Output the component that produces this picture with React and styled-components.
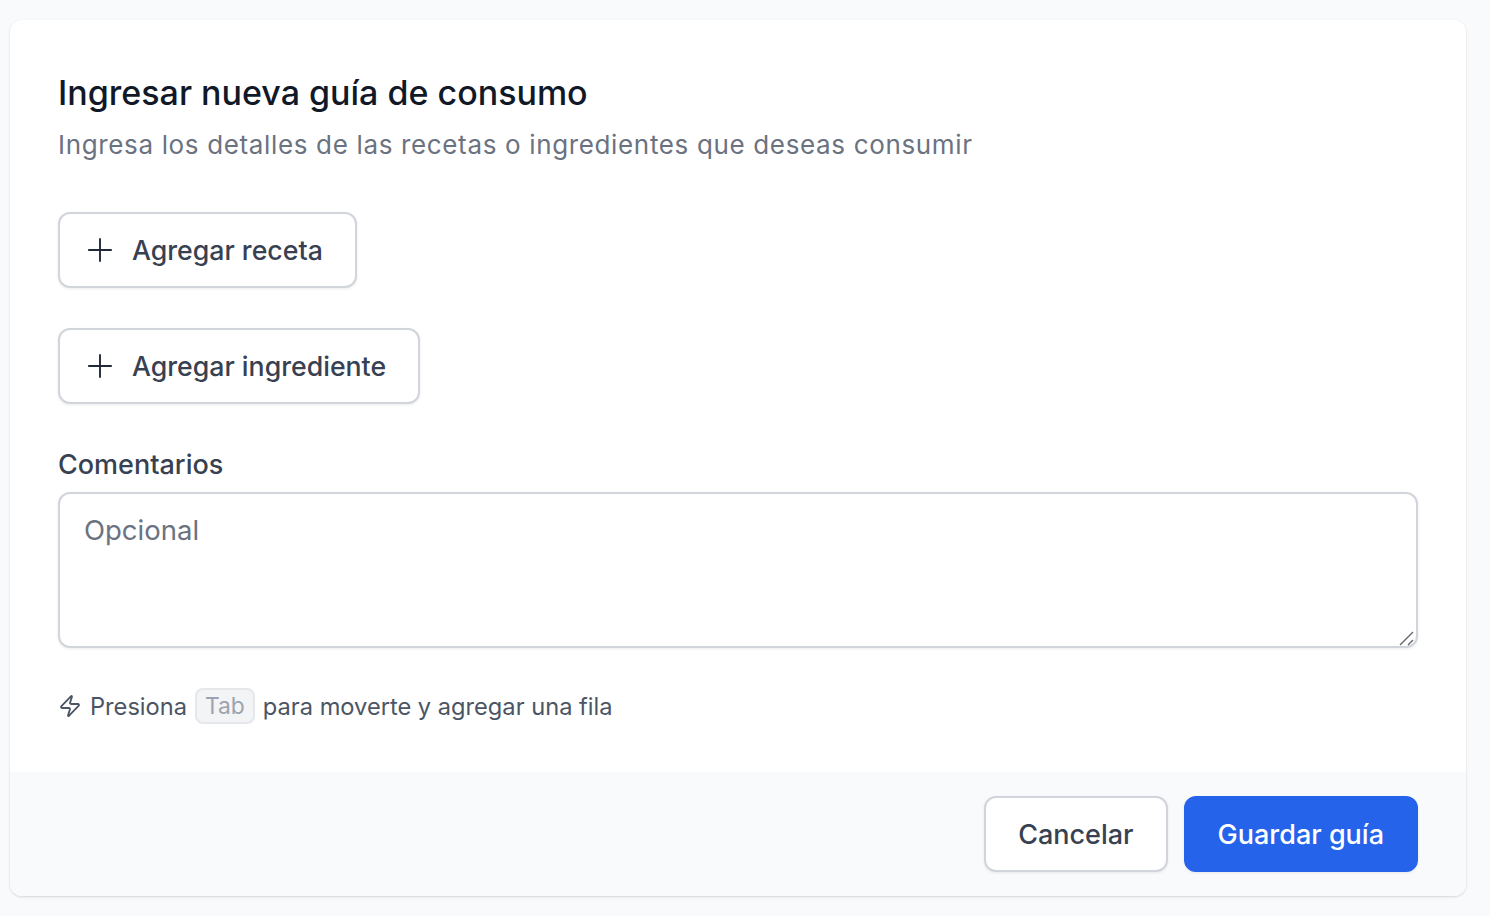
import styled, { createGlobalStyle } from 'styled-components'
import { Plus, Zap } from 'lucide-react'

const GlobalStyle = createGlobalStyle`
  html, body {
    margin: 0;
    background: #f9fafb;
    font-family: Inter, "Noto Sans", sans-serif;
  }
  * { box-sizing: border-box; }
`

const Page = styled.div`
  padding: 20px 24px 20px 10px;
  height: 916px;
  overflow: hidden;
`
const Card = styled.form`
  background: #fff;
  border-radius: 12px;
  box-shadow: 0 1px 3px rgba(0, 0, 0, 0.1), 0 1px 2px rgba(0, 0, 0, 0.06);
  overflow: hidden;
  height: 876px;
  display: flex;
  flex-direction: column;
`
const Body = styled.div`
  flex: 1;
  padding: 49px 48px 0;
`
const Title = styled.h3`
  margin: 0;
  font-size: 34px;
  line-height: 48px;
  font-weight: 500;
  color: #111827;
`
const Subtitle = styled.p`
  margin: 8px 0 0;
  font-size: 26px;
  line-height: 40px;
  letter-spacing: 0.65px;
  color: #6b7280;
`
const AddButton = styled.button`
  display: flex;
  align-items: center;
  gap: 13px;
  height: 76px;
  padding: 0 32px 0 21px;
  margin-top: ${props => props.$top}px;
  background: #fff;
  border: 2px solid #d1d5db;
  border-radius: 12px;
  box-shadow: 0 1px 3px rgba(0, 0, 0, 0.08);
  font: 500 26.7px/40px Inter, sans-serif;
  color: #374151;
`
const Label = styled.label`
  display: block;
  margin-top: 41px;
  font-size: 27px;
  line-height: 40px;
  font-weight: 500;
  color: #374151;
`
const CommentsBox = styled.div`
  position: relative;
  margin-top: 7px;
`
const Comments = styled.textarea`
  display: block;
  width: 100%;
  height: 156px;
  padding: 16px 24px;
  background: #fff;
  border: 2px solid #d1d5db;
  border-radius: 12px;
  box-shadow: 0 1px 3px rgba(0, 0, 0, 0.08);
  font: 400 27.5px/40px Inter, sans-serif;
  color: #374151;
  outline: none;
  resize: none;
  &::placeholder {
    color: #6b7280;
    opacity: 1;
  }
`
const Grip = styled.svg`
  position: absolute;
  right: 3px;
  bottom: 2px;
  width: 16px;
  height: 16px;
  pointer-events: none;
`
const Hint = styled.p`
  display: flex;
  align-items: center;
  margin: 40px 0 0;
  font-size: 23.65px;
  line-height: 36px;
  color: #4b5563;
  svg {
    margin-right: 8px;
    flex-shrink: 0;
  }
`
const HintText = styled.span`
  position: relative;
  top: 1px;
`
const Key = styled.kbd`
  margin: 0 8px;
  padding: 0 8px;
  height: 36px;
  display: inline-flex;
  align-items: center;
  background: #f3f4f6;
  border: 2px solid #e5e7eb;
  border-radius: 8px;
  font: 400 22.8px/32px Inter, sans-serif;
  color: #9ca3af;
`
const Footer = styled.div`
  display: flex;
  justify-content: flex-end;
  gap: 16px;
  height: 124px;
  padding: 24px 48px;
  background: #f9fafb;
`
const FooterButton = styled.button`
  height: 76px;
  padding: 1px 32px 0;
  border-radius: 12px;
  font: 500 27px/40px Inter, sans-serif;
  border: 2px solid ${props => (props.$primary ? '#2563eb' : '#d1d5db')};
  background: ${props => (props.$primary ? '#2563eb' : '#fff')};
  color: ${props => (props.$primary ? '#fff' : '#374151')};
  box-shadow: 0 1px 3px rgba(0, 0, 0, 0.08);
`

function App () {
  return (
    <Page>
      <GlobalStyle />
      <Card>
        <Body>
          <Title>Ingresar nueva guía de consumo</Title>
          <Subtitle>Ingresa los detalles de las recetas o ingredientes que deseas consumir</Subtitle>
          <AddButton type="button" $top={47}>
            <Plus size={38} strokeWidth={1.2} color="#1f2937" />
            Agregar receta
          </AddButton>
          <AddButton type="button" $top={40}>
            <Plus size={38} strokeWidth={1.2} color="#1f2937" />
            Agregar ingrediente
          </AddButton>
          <Label htmlFor="comentarios">Comentarios</Label>
          <CommentsBox>
            <Comments id="comentarios" placeholder="Opcional" />
            <Grip viewBox="0 0 16 16" fill="none" stroke="#666" strokeWidth="1.4">
              <path d="M1 15 L14 2 M9 15 L14 10" />
            </Grip>
          </CommentsBox>
          <Hint>
            <Zap size={24} strokeWidth={1.8} color="#4b5563" />
            <HintText>Presiona</HintText>
            <Key>Tab</Key>
            <HintText>para moverte y agregar una fila</HintText>
          </Hint>
        </Body>
        <Footer>
          <FooterButton type="button">Cancelar</FooterButton>
          <FooterButton type="button" $primary>Guardar guía</FooterButton>
        </Footer>
      </Card>
    </Page>
  )
}

export default App
